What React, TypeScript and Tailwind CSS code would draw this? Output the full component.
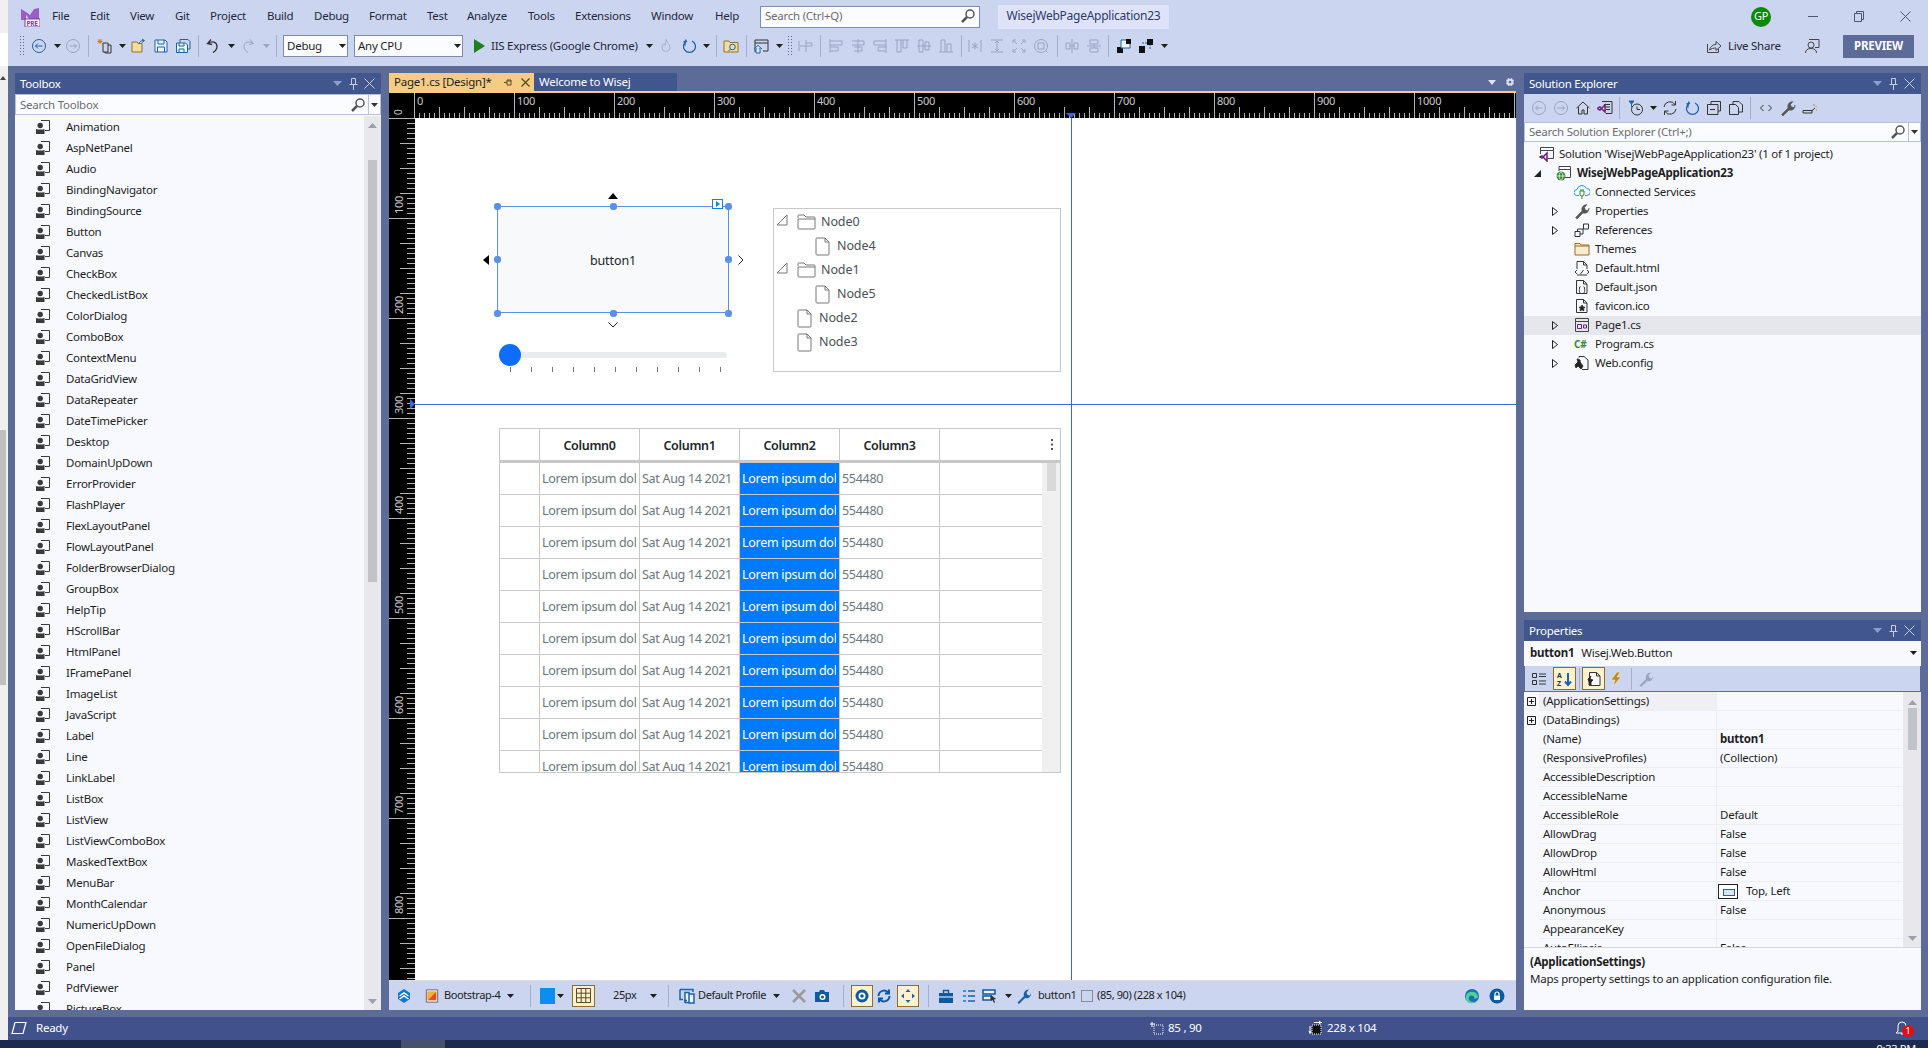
import type { ReactNode } from "react";

const toolboxItems = [
  "Animation", "AspNetPanel", "Audio", "BindingNavigator", "BindingSource", "Button", "Canvas", "CheckBox",
  "CheckedListBox", "ColorDialog", "ComboBox", "ContextMenu", "DataGridView", "DataRepeater", "DateTimePicker",
  "Desktop", "DomainUpDown", "ErrorProvider", "FlashPlayer", "FlexLayoutPanel", "FlowLayoutPanel",
  "FolderBrowserDialog", "GroupBox", "HelpTip", "HScrollBar", "HtmlPanel", "IFramePanel", "ImageList", "JavaScript",
  "Label", "Line", "LinkLabel", "ListBox", "ListView", "ListViewComboBox", "MaskedTextBox", "MenuBar",
  "MonthCalendar", "NumericUpDown", "OpenFileDialog", "Panel", "PdfViewer", "PictureBox",
];

const menus = [
  { label: "File", w: "w-[38px]" },
  { label: "Edit", w: "w-[40px]" },
  { label: "View", w: "w-[45px]" },
  { label: "Git", w: "w-[35px]" },
  { label: "Project", w: "w-[57px]" },
  { label: "Build", w: "w-[47px]" },
  { label: "Debug", w: "w-[55px]" },
  { label: "Format", w: "w-[58px]" },
  { label: "Test", w: "w-[40px]" },
  { label: "Analyze", w: "w-[61px]" },
  { label: "Tools", w: "w-[47px]" },
  { label: "Extensions", w: "w-[76px]" },
  { label: "Window", w: "w-[64px]" },
  { label: "Help", w: "w-[45px]" },
];

const props: [string, string, boolean?][] = [
  ["(ApplicationSettings)", "", true],
  ["(DataBindings)", "", true],
  ["(Name)", "button1"],
  ["(ResponsiveProfiles)", "(Collection)"],
  ["AccessibleDescription", ""],
  ["AccessibleName", ""],
  ["AccessibleRole", "Default"],
  ["AllowDrag", "False"],
  ["AllowDrop", "False"],
  ["AllowHtml", "False"],
  ["Anchor", "Top, Left"],
  ["Anonymous", "False"],
  ["AppearanceKey", ""],
  ["AutoEllipsis", "False"],
];

const BLUE = "#1c62a8";
const DIS = "#9aa3bf";
const DARK = "#333";

const icons: Record<string, ReactNode> = {
  back: <g stroke={BLUE}><circle cx="8" cy="8" r="6.5" /><path d="M11.5 8h-7M7 5.5 4.5 8 7 10.5" /></g>,
  fwd: <g stroke={DIS}><circle cx="8" cy="8" r="6.5" /><path d="M4.5 8h7M9 5.5 11.5 8 9 10.5" /></g>,
  backDis: <g stroke={DIS}><circle cx="8" cy="8" r="6.5" /><path d="M11.5 8h-7M7 5.5 4.5 8 7 10.5" /></g>,
  newProj: <g stroke={DARK}><path d="M3 1v5M.5 3.500h5M1 1.500l4 4M5 1.500l-4 4" stroke="#c27d0e" /><path d="M6 5h5v9H6zM11 7h3v8H8v-1" /></g>,
  open: <g><path d="M1 14V4h5l1 1.500h4V14z" fill="#f2dca6" stroke="#996f1e" /><path d="M8 6c0-2 2-3.500 5-3.500M11 1l2.500 1.500L11 4.500" stroke={BLUE} /></g>,
  save: <g stroke={BLUE}><path d="M2 2h10l2 2v10H2z" fill="#eef2fb" /><path d="M5 2v4h6V2M4.500 14V9h7v5" /></g>,
  saveAll: <g stroke={BLUE}><path d="M5 5V1.500h8l2 2V11h-3" /><path d="M1.500 5h9l2 2v7.500h-11z" fill="#eef2fb" /><path d="M4 5v3h5V5M4 14.500V11h5v3.500" /></g>,
  undo: <g stroke={DARK} strokeWidth="1.300"><path d="M6 1.500 2.500 5.500l4.500 1M3 5.500c4-3 9-1.500 9 3 0 2.500-1.500 4.500-4 6" /></g>,
  redo: <g stroke={DIS}><path d="M10 1.500l3.500 4-4.500 1M13 5.500c-4-3-9-1.500-9 3 0 2.500 1.500 4.500 4 6" /></g>,
  flame: <path d="M8 1.500c1 3 4 4.500 4 8a4 4 0 0 1-8 0c0-2 1-3 2-4 0 1.500 1 2 1.500 2 .5-2 0-4 .5-6z" stroke="#a9b0c7" />,
  reload: <path d="M5 1.500 4 6l-1-3M6 3a6 6 0 1 0 5 0" stroke={BLUE} strokeWidth="1.300" />,
  folderFind: <g><path d="M1 14V3h5l1 1.500h8V14z" fill="#f2dca6" stroke="#996f1e" /><circle cx="9.500" cy="9" r="2.800" stroke={BLUE} /><path d="M7.500 11 5.500 13" stroke={BLUE} /></g>,
  winHome: <g stroke={DARK}><path d="M2 14V2h13v11h-5M2 5h13" /><path d="M1 11l4-3.500L9 11M3 10v5h4v-5" stroke={BLUE} fill="#dfe9fa" /></g>,
  hcenter: <g stroke={DIS}><path d="M1 3v10M8 2v12M8 5h6v3H8M2 8h6" /></g>,
  alignL: <g stroke={DIS}><path d="M2 1v14M2 3h12v4H2M2 9h8v4H2" /></g>,
  alignC: <g stroke={DIS}><path d="M8 1v14M2 3h12v4H2M4 9h8v4H4" /></g>,
  alignR: <g stroke={DIS}><path d="M14 1v14M14 3H2v4h12M14 9H6v4h8" /></g>,
  alignT: <g stroke={DIS}><path d="M1 2h14M3 2v12h4V2M9 2v8h4V2" /></g>,
  alignM: <g stroke={DIS}><path d="M1 8h14M3 2h4v12H3zM9 4h4v8H9z" /></g>,
  alignB: <g stroke={DIS}><path d="M1 14h14M3 14V2h4v12M9 14V6h4v8" /></g>,
  sameW: <g stroke={DIS}><path d="M2 2v12M14 2v12M8 4.500v7M5 6l3 2 3-2M5 10l3-2 3 2" /></g>,
  sameH: <g stroke={DIS}><path d="M2 2h12M2 14h12M8 3v10M6 5l2-2 2 2M6 11l2 2 2-2" /></g>,
  sameS: <g stroke={DIS}><path d="M2 5V2h3M11 2h3v3M14 11v3h-3M5 14H2v-3M3 3l3 3M13 3l-3 3M3 13l3-3M13 13l-3-3" /></g>,
  sizeF: <g stroke={DIS}><circle cx="8" cy="8" r="6.500" /><path d="M5 5h6v6H5z" /><path d="M12.500 12.500l2 2" /></g>,
  centerH: <g stroke={DIS}><path d="M2 5h4v6H2zM10 5h4v6h-4zM6 8h4M8 1v14" /></g>,
  centerV: <g stroke={DIS}><path d="M4 2h8v4H4zM4 10h8v4H4zM8 6v4M1 8h14" /></g>,
  front: <g><path d="M1 9h6v6H1z" fill="#111" /><path d="M5 2h9v8H5z" fill="#f4f8ff" stroke={BLUE} /><path d="M10 1h5v5h-5z" fill="#111" /></g>,
  rear: <g><path d="M1 8h6v7H1z" fill="#111" /><path d="M4 5h8v6" stroke={BLUE} strokeDasharray="2 1" /><path d="M9 1h6v6H9z" fill="#111" /></g>,
  search: <g stroke="#555" strokeWidth="1.500"><circle cx="10" cy="6" r="4" /><path d="M7 9l-5 5" strokeWidth="2.500" /></g>,
  share: <g stroke="#444"><path d="M1.500 6v8.500h11V11" /><path d="M3.500 12c1-4 4-5.500 6.500-5.500V3.500l5 4.500-5 4.500V10c-2.500 0-4.500.5-6.500 2z" /></g>,
  person: <g stroke="#444"><path d="M5 1.500h10v8h-4" /><circle cx="7" cy="7" r="3" fill="#ccd5f0" /><path d="M1.500 15c0-3 2-4.500 5.500-4.500s5.500 1.500 5.500 4.500" /></g>,
  home: <path d="M1.500 8 8 2l6.500 6M3.500 7v7h3.500v-4h2v4h3.500V7" stroke={DARK} />,
  vsSwitch: <g><path d="M5 1.500h10v12H9M7 4.500h6M7 7h6M9 9.500h4" stroke={DARK} /><path d="M1 8l2-1 5 5V5L3 10l-2-1z" stroke="#68217a" strokeWidth="1.500" fill="#fff" /></g>,
  history: <g stroke={DARK}><circle cx="9" cy="9.500" r="5.500" /><path d="M9 6.500v3h3" /><path d="M1 1h5L3.500 4z" fill={BLUE} stroke={BLUE} /><path d="M3.500 4v3" stroke={BLUE} /></g>,
  sync: <g stroke={DARK}><path d="M2 7a6 6 0 0 1 11-2.500M13.500 1v4h-4M14 9a6 6 0 0 1-11 2.500M2.500 15v-4h4" /></g>,
  collapse: <g stroke={DARK}><path d="M5 4V1.500h9.500V11H12" /><path d="M1.500 4.500H12v10H1.500zM4 9.500h5" /></g>,
  showAll: <g stroke={DARK}><path d="M5 4V1.500h6l3.500 3.500v7H11" /><path d="M1.500 4.500h6l3 3v7h-9z" fill="#ccd5f0" /></g>,
  code: <path d="M5.500 5 2.500 8l3 3M10.500 5l3 3-3 3" stroke={DARK} />,
  wrench: <path d="M1.500 14.500 8 8c-1-3 1-6.500 5-6.500l-2.500 3 1 2.500 2.500.5L15 5c.5 4-3 6-6 5l-6 6z" fill="#555" stroke="#555" strokeWidth=".5" />,
  wrenchBlue: <path d="M1.500 14.500 8 8c-1-3 1-6.500 5-6.500l-2.500 3 1 2.500 2.500.5L15 5c.5 4-3 6-6 5l-6 6z" fill={BLUE} />,
  wrenchDis: <path d="M1.500 14.500 8 8c-1-3 1-6.500 5-6.500l-2.500 3 1 2.500 2.500.5L15 5c.5 4-3 6-6 5l-6 6z" fill={DIS} />,
  previewOn: <g stroke={DARK}><path d="M1 13h9v-2.500H1zM9.500 11 13 8" /><path d="M12 4v2M14.500 6l-1 1M15 10h-1" stroke="#c28a1a" /></g>,
  toolboxItem: <g><circle cx="5.200" cy="6.500" r="2.700" fill="#3a3a3a" /><path d="M1 15v-5l2 .5h4.500l2-.5v5z" fill="#3a3a3a" /><path d="M6 1.500h8.500v10H10" stroke="#3a3a3a" /></g>,
  solution: <g><path d="M1.500 1.500h13v11h-6M1.500 4.500h13M1.500 1.500V8" stroke="#444" /><path d="M1 11l2-1 5 5V7l-5 5-2-1z" stroke="#68217a" strokeWidth="1.500" /></g>,
  project: <g><path d="M3 1.500h11.500v11H9M3 4.500h11.500M3 1.500V6" stroke="#444" /><circle cx="5" cy="11" r="4.500" fill="#388a34" /><path d="M.5 11h9M5 6.500c-2.500 3-2.500 6 0 9M5 6.500c2.500 3 2.500 6 0 9" stroke="#fff" strokeWidth=".7" /></g>,
  cloud: <g><path d="M5 11.500H3a3 3 0 0 1 0-6 5 5 0 0 1 9.500-1 3.500 3.500 0 0 1 .5 7h-2" stroke="#1ba1e2" /><path d="M6 7v3a2 2 0 0 0 4 0V7zM7 7V5M9 7V5M8 12v3" stroke="#388a34" /></g>,
  refs: <g stroke={DARK}><path d="M1 9.500h5v5H1zM9.500 2h5v5h-5zM6 12h3V7" /><path d="M3.500 9.500V7h6" /></g>,
  folderPlain: <path d="M1 14V2.500h5L7 4h8v10zM1 5h14" stroke="#996f1e" fill="#f6eccf" />,
  htmlFile: <g stroke={DARK}><path d="M3 9V1.500h6.500L13 5v4M3 15h10M9.500 1.500V5H13" /><path d="M3 10l-2 2 2 2M13 10l2 2-2 2M6.500 14l3-4" /></g>,
  jsonFile: <g stroke={DARK}><path d="M2.500 14.500v-13h7L13 5v9.500zM9.500 1.500V5H13" /><path d="M6.500 7.500c-1.500 0-.5 3-1.500 3.500 1 .5 0 3 1.500 3M9.500 7.500c1.500 0 .5 3 1.500 3.500-1 .5 0 3-1.500 3" /></g>,
  icoFile: <g stroke={DARK}><path d="M2.500 14.500v-13h7L13 5v9.500zM9.500 1.500V5H13" /><path d="M8 7l1 2 2 .3-1.500 1.400.4 2.100L8 11.800l-1.900 1 .4-2.100L5 9.300 7 9z" fill="#222" /></g>,
  form: <g stroke="#444"><path d="M1.500 1.500h13v13h-13zM1.500 4.500h13" /><path d="M3.500 7.500h4v4h-4zM9.500 8h3v3h-3z" stroke="#68217a" /></g>,
  webCfg: <g stroke={DARK}><path d="M5 2.500v-1h5L14 5v9.500H8" /><path d="M1 10l3-3-1-3c2 0 4 1 3 3l3 4-2 3-3-3-2 2z" fill="#222" /></g>,
  categorize: <g stroke={DARK}><path d="M1.500 2.500h4v4h-4zM1.500 9.500h4v4h-4zM8 3h7M8 5.500h7M8 10h7M8 13h7" /></g>,
  alpha: <g><text x="0" y="7" fontSize="7" fontWeight="700" fill={DARK}>A</text><text x="0" y="15" fontSize="7" fontWeight="700" fill={DARK}>Z</text><path d="M11 2v12M8 10.500l3 3.500 3-3.500" stroke={BLUE} strokeWidth="2" /></g>,
  propPage: <g stroke={DARK}><path d="M3.500 1.500h7L14 5v9.500H3.500zM10.500 1.500V5H14" fill="#fff" /><path d="M2 8l3-3-1 3 3 1-2 2v3H3v-3z" fill="#222" /></g>,
  bolt: <path d="M9 1 3 9h4l-2 6 8-9H9l3-5z" fill="#c28a1a" stroke="#f5f0d5" strokeWidth=".5" />,
  wisej: <g><path d="M8 1l6 4v6l-6 4-6-4V5z" fill="#0a78d6" /><path d="M3.500 8 8 5l4.500 3M3.500 11 8 8l4.500 3" stroke="#fff" strokeWidth="1.500" /></g>,
  theme: <g><path d="M1.500 1h13v14h-13z" fill="#fff" stroke="#555" /><path d="M3 3h10v10H3z" fill="#e84d1c" /><path d="M3 3h10L3 13z" fill="#f8b030" /></g>,
  devices: <g stroke={BLUE} strokeWidth="1.500"><path d="M1 1.500h13V4M4 11.500H1v-10" /><path d="M5 12.500h3M6 4.500h4v10H6zM10 6h5v9h-5z" fill="#eef2fb" /></g>,
  xGray: <path d="M2 2l12 12M14 2 2 14" stroke="#9a9a9a" strokeWidth="2.500" />,
  camera: <g><path d="M1 4h4l1-2h4l1 2h4v10H1z" fill="#0e5aa0" /><circle cx="8.500" cy="9" r="3" fill="#fff" /><circle cx="8.500" cy="9" r="1.500" fill="#0e5aa0" /></g>,
  eye: <g><circle cx="8" cy="8" r="6.500" fill="#0e5aa0" /><circle cx="8" cy="8" r="3.500" fill="#fff" /><circle cx="8" cy="8" r="1.800" fill="#0e5aa0" /></g>,
  reloadBold: <path d="M2.500 8a5.500 5.500 0 0 1 10-3M13.500 8a5.500 5.500 0 0 1-10 3M13 1.500V5.500H9M3 14.500V10.500H7" stroke="#0e5aa0" strokeWidth="2" />,
  move: <g fill={BLUE}><path d="M8 1 5.500 4h5zM8 15l-2.500-3h5zM1 8l3-2.500v5zM15 8l-3-2.500v5z" /></g>,
  briefcase: <g><path d="M1 5h14v10H1z" fill="#0e5aa0" /><path d="M5.500 5V2.500h5V5" stroke="#0e5aa0" strokeWidth="1.500" /><path d="M1 9h14" stroke="#fff" /></g>,
  tree: <g><path d="M2 2h3v2H2zM2 7h3v2H2zM2 12h3v2H2z" fill="#1ba1e2" /><path d="M7 3h7M7 8h7M7 13h7" stroke={BLUE} strokeWidth="1.300" /></g>,
  cursor: <g><path d="M1 2h12v4H1zM1 8h8v4H1z" stroke="#0e5aa0" fill="#eef2fb" strokeWidth="1.500" /><path d="M9 7l5 4-2 .5 1 3-1 .5-1.500-3L9 13z" fill="#333" /></g>,
  dotted: <path d="M2.500 2.500h11v11h-11z" stroke="#444" strokeDasharray="1 1" />,
  edge: <g><circle cx="8" cy="8" r="7" fill="#1a6fb5" /><path d="M2 8c1-5 10-6 12 0 .5 2-2 3-4 2.500 1-2-1-3.500-3-3-3 .5-3 4.500 0 6 1 .5 3 .5 4.500 0-2 2-6 2.500-8 .5C2.500 13 1.500 10 2 8z" fill="#4fcf9a" /></g>,
  lock: <g><circle cx="8" cy="8" r="7.500" fill="#0e5aa0" /><path d="M5 7.500h6V12H5z" fill="#fff" /><path d="M6 7.500V6a2 2 0 0 1 4 0v1.500" stroke="#fff" strokeWidth="1.200" /></g>,
  ready: <path d="M4 2.500h11L12 13.500H1z" stroke="#fff" strokeWidth="1.200" />,
  pos: <g stroke="#fff"><path d="M5 5h9v9H5z" strokeDasharray="1 1" /><path d="M3 2v5M1 4h5" /></g>,
  size: <g><path d="M4 5h9v9H4z" fill="#111" stroke="#fff" strokeDasharray="1 1" /><path d="M6 2.500h8M11 1l2 1.500L11 4M2 6v8M1 11l1 2 1-2" stroke="#fff" /></g>,
  bell: <path d="M8 2a4 4 0 0 1 4 4v5l2 2H2l2-2V6a4 4 0 0 1 4-4zM7 14h2" stroke="#fff" />,
  gear: <g><path d="M6 3v10M10 3v10M3 6h10M3 10h10" stroke="#d8def0" strokeWidth="1.800" /><circle cx="8" cy="8" r="4.500" fill="#d8def0" /><circle cx="8" cy="8" r="1.800" fill="#5d6b99" /></g>,
};

function Ic({ name, className = "w-[22px]" }: { name: string; className?: string }) {
  return (
    <span className={`flex items-center justify-center shrink-0 ${className}`}>
      <svg width="16" height="16" viewBox="0 0 16 16" fill="none">
        {icons[name]}
      </svg>
    </span>
  );
}

function Caret({ className = "", color = "#1e1e1e" }: { className?: string; color?: string }) {
  return (
    <span className={`flex items-center justify-center w-[10px] shrink-0 ${className}`}>
      <svg width="7" height="4" viewBox="0 0 7 4">
        <path d="M0 0h7L3.500 4z" fill={color} />
      </svg>
    </span>
  );
}

function Sep({ className = "" }: { className?: string }) {
  return <span className={`w-px h-[22px] bg-[#a5afcb] shrink-0 ${className}`} />;
}

function Grip({ className = "" }: { className?: string }) {
  return (
    <span
      className={`w-[6px] h-[22px] shrink-0 bg-[radial-gradient(#596a9c_1px,transparent_1px)] bg-[length:3px_3px] ${className}`}
    />
  );
}

function Combo({ label, className }: { label: string; className: string }) {
  return (
    <span
      className={`h-[22px] bg-[#fbfcff] border border-[#7f8bad] flex items-center pl-[3px] shrink-0 ${className}`}
    >
      {label}
      <Caret className="ml-auto" />
    </span>
  );
}

function TitleBar() {
  return (
    <div className="h-[66px] bg-[#ccd5f0] flex flex-col shrink-0">
      <div className="h-[33px] flex items-center">
        <svg className="ml-[12px] mr-[12px] shrink-0" width="20" height="20" viewBox="0 0 20 20">
          <path d="M1 13V2l5 3 4 3 4-6 5-1v12z" fill="#9c5dc9" />
          <path d="M6 8 10 13 6 13z" fill="#ccd5f0" />
          <rect x="5" y="12" width="15" height="8" fill="#fff" stroke="#7b3fa8" />
          <text x="6.500" y="18.500" fontSize="6.500" fontWeight="700" fill="#7b3fa8">PRE</text>
        </svg>
        {menus.map((m) => (
          <span key={m.label} className={`text-[#24273a] shrink-0 -mt-[2px] ${m.w}`}>
            {m.label}
          </span>
        ))}
        <div className="w-[220px] h-[22px] bg-[#fbfcff] border border-[#7f8bad] flex items-center pl-[4px] pb-px text-[#6d6d6d] shrink-0">
          Search (Ctrl+Q)
          <Ic name="search" className="ml-auto w-[22px]" />
        </div>
        <div className="ml-[18px] w-[171px] h-[24px] pb-px bg-[#dfe3fa] text-[#2c3a6a] text-[12px] flex items-center justify-center shrink-0">
          WisejWebPageApplication23
        </div>
        <span className="ml-auto mr-[19px] w-[20px] h-[20px] rounded-full bg-[#0a8a0a] text-white text-[11px] flex items-center justify-center">
          GP
        </span>
        <span className="w-[46px] flex justify-center">
          <span className="w-[10px] h-px bg-[#4d5570]" />
        </span>
        <span className="w-[46px] flex justify-center">
          <svg width="10" height="11" viewBox="0 0 10 11" fill="none" stroke="#4d5570">
            <path d="M.5 2.500h7v8h-7zM2.500 2.500v-2h7v8h-2" />
          </svg>
        </span>
        <span className="w-[46px] flex justify-center">
          <svg width="11" height="11" viewBox="0 0 11 11" fill="none" stroke="#4d5570">
            <path d="M.5.5l10 10M10.500.5l-10 10" />
          </svg>
        </span>
      </div>
      <div className="h-[33px] flex items-center pl-[11px] pb-[7px]">
        <Grip />
        <Ic name="back" className="w-[22px] ml-[3px]" />
        <Caret className="ml-[2px]" />
        <Ic name="fwd" />
        <Sep className="ml-[4px]" />
        <Ic name="newProj" className="w-[22px] ml-[5px]" />
        <Caret className="ml-px" />
        <Ic name="open" className="w-[22px] ml-px" />
        <Ic name="save" />
        <Ic name="saveAll" />
        <Sep className="ml-[4px]" />
        <Ic name="undo" className="w-[22px] ml-[3px]" />
        <Caret className="ml-[2px]" />
        <Ic name="redo" className="w-[22px] ml-px" />
        <Caret className="ml-[2px]" color={DIS} />
        <Sep className="ml-[5px]" />
        <Combo label="Debug" className="w-[65px] ml-[6px]" />
        <Combo label="Any CPU" className="w-[109px] ml-[6px]" />
        <svg className="ml-[8px] shrink-0" width="16" height="16" viewBox="0 0 16 16">
          <path d="M3 1l11 7-11 7z" fill="#1e7f1e" />
        </svg>
        <span className="ml-[4px] w-[150px] shrink-0 whitespace-nowrap text-[#24273a]">IIS Express (Google Chrome)</span>
        <Caret className="ml-[3px]" />
        <Ic name="flame" className="w-[22px] ml-px" />
        <Ic name="reload" className="w-[22px] ml-px" />
        <Caret className="ml-px" />
        <Sep className="ml-[5px]" />
        <Ic name="folderFind" className="w-[22px] ml-[3px]" />
        <Sep className="ml-[4px]" />
        <Ic name="winHome" className="w-[22px] ml-[3px]" />
        <Caret className="ml-[2px]" />
        <Grip className="ml-[3px]" />
        <Ic name="hcenter" className="w-[22px] ml-[2px]" />
        <Sep className="ml-[3px]" />
        <Ic name="alignL" className="w-[22px] ml-[4px]" />
        <Ic name="alignC" />
        <Ic name="alignR" />
        <Ic name="alignT" />
        <Ic name="alignM" />
        <Ic name="alignB" />
        <Sep className="ml-[4px]" />
        <Ic name="sameW" className="w-[22px] ml-[2px]" />
        <Ic name="sameH" />
        <Ic name="sameS" />
        <Ic name="sizeF" />
        <Sep className="ml-[5px]" />
        <Ic name="centerH" className="w-[22px] ml-[3px]" />
        <Ic name="centerV" />
        <Sep className="ml-[3px]" />
        <Ic name="front" className="w-[22px] ml-[4px]" />
        <Ic name="rear" />
        <Caret className="ml-[2px]" />
        <Ic name="share" className="ml-auto w-[16px]" />
        <span className="ml-[6px] w-[54px] whitespace-nowrap text-[#24273a]">Live Share</span>
        <Ic name="person" className="w-[16px] ml-[22px]" />
        <span className="ml-[23px] mr-[14px] w-[71px] h-[23px] bg-[#5d6b99] text-white text-[11.5px] font-bold flex items-center justify-center">
          PREVIEW
        </span>
      </div>
    </div>
  );
}

function PanelHeader({ title }: { title: string }) {
  return (
    <div className="h-[21px] bg-[#40568d] text-white flex items-center pl-[5px] pr-[4px] shrink-0">
      <span>{title}</span>
      <span className="ml-auto w-[16px] flex justify-center">
        <svg width="9" height="5" viewBox="0 0 9 5">
          <path d="M0 0h9L4.500 5z" fill="#8f9ccb" />
        </svg>
      </span>
      <span className="w-[16px] flex justify-center">
        <svg width="9" height="12" viewBox="0 0 9 12" fill="none" stroke="#c6cfe8">
          <path d="M2.500.5h4v6h-4zM.5 6.500h8M4.500 6.500V12" />
        </svg>
      </span>
      <span className="w-[16px] flex justify-center">
        <svg width="11" height="11" viewBox="0 0 11 11" fill="none" stroke="#c6cfe8">
          <path d="M.5.5l10 10M10.500.5l-10 10" />
        </svg>
      </span>
    </div>
  );
}

function SearchBox({ label, className }: { label: string; className: string }) {
  return (
    <div className={`flex items-stretch bg-[#fbfcff] border border-[#b8c1dc] shrink-0 ${className}`}>
      <span className="pl-[4px] flex-1 flex items-center text-[#6d6d6d]">{label}</span>
      <Ic name="search" className="w-[20px]" />
      <span className="w-[12px] bg-[#fbfcff] border-l border-[#b8c1dc] flex items-center justify-center">
        <svg width="7" height="4" viewBox="0 0 7 4">
          <path d="M0 0h7L3.500 4z" fill="#333" />
        </svg>
      </span>
    </div>
  );
}

function Toolbox() {
  return (
    <div className="w-[366px] flex flex-col shrink-0">
      <PanelHeader title="Toolbox" />
      <SearchBox label="Search Toolbox" className="h-[21px]" />
      <div className="flex-1 min-h-0 flex bg-[#f8f9ff] pt-px">
        <div className="flex-1 overflow-hidden">
          {toolboxItems.map((t) => (
            <div key={t} className="h-[21px] flex items-center pl-[20px]">
              <Ic name="toolboxItem" className="w-[16px]" />
              <span className="ml-[15px]">{t}</span>
            </div>
          ))}
        </div>
        <div className="w-[17px] bg-[#e8e8ec] flex flex-col items-center">
          <svg className="mt-[7px]" width="9" height="5" viewBox="0 0 9 5">
            <path d="M0 5h9L4.500 0z" fill="#9ca0ad" />
          </svg>
          <div className="mt-[32px] w-[9px] h-[422px] bg-[#c2c3c9]" />
          <svg className="mt-auto mb-[6px]" width="9" height="5" viewBox="0 0 9 5">
            <path d="M0 0h9L4.500 5z" fill="#9ca0ad" />
          </svg>
        </div>
      </div>
    </div>
  );
}

const topTicks = Array.from({ length: 221 }, (_, i) => i * 5);
const sideTicks = Array.from({ length: 173 }, (_, i) => i * 5);

function TopRuler() {
  return (
    <svg className="block bg-black shrink-0" width="1127" height="25" viewBox="0 0 1127 25">
      {topTicks.map((v) => {
        const x = 25.5 + v;
        const h = v % 100 === 0 ? 25 : v % 25 === 0 ? 11 : 5;
        return <path key={v} d={`M${x} 25v-${h}`} stroke="#b4b4b4" />;
      })}
      {topTicks
        .filter((v) => v % 100 === 0)
        .map((v) => (
          <text key={v} x={28 + v} y="12" fontSize="11" fill="#c8c8c8">
            {v}
          </text>
        ))}
      <text x="0" y="0" transform="translate(13 22) rotate(-90)" fontSize="10" fill="#c8c8c8">0</text>
      <path d="M677 20h10l-5 5z" fill="#3f66d8" />
    </svg>
  );
}

function SideRuler() {
  return (
    <svg className="block bg-black shrink-0" width="26" height="862" viewBox="0 0 26 862">
      {sideTicks.map((v) => {
        const h = v % 100 === 0 ? 26 : v % 25 === 0 ? 15 : 8;
        return <path key={v} d={`M26 ${v + 0.5}h-${h}`} stroke="#b4b4b4" />;
      })}
      {sideTicks
        .filter((v) => v % 100 === 0 && v > 0)
        .map((v) => (
          <text key={v} x="0" y="0" transform={`translate(14 ${v - 4}) rotate(-90)`} fontSize="11" fill="#c8c8c8">
            {v}
          </text>
        ))}
      <path d="M21 281v10l5-5z" fill="#3f66d8" />
    </svg>
  );
}

function Handle({ className }: { className: string }) {
  return <span className={`absolute w-[7px] h-[7px] rounded-[3px] bg-[#5b8fe8] ${className}`} />;
}

function FileIcon() {
  return (
    <svg className="shrink-0" width="15" height="19" viewBox="0 0 15 19" fill="none" stroke="#777">
      <path d="M2 1h8l4 4v12a1 1 0 0 1-1 1H2a1 1 0 0 1-1-1V2a1 1 0 0 1 1-1zM10 1v4h4" />
    </svg>
  );
}

function FolderIcon() {
  return (
    <svg className="shrink-0" width="19" height="16" viewBox="0 0 19 16" fill="none" stroke="#777">
      <path d="M1 4V2a1 1 0 0 1 1-1h5l2 2h8a1 1 0 0 1 1 1v1M1 5h17v9a1 1 0 0 1-1 1H2a1 1 0 0 1-1-1z" />
    </svg>
  );
}

function Expander() {
  return (
    <svg className="shrink-0 -mt-[4px]" width="12" height="12" viewBox="0 0 12 12" fill="none" stroke="#777">
      <path d="M11 1 1 11h10z" />
    </svg>
  );
}

function TreeBox() {
  return (
    <div className="absolute left-[358px] top-[90px] w-[288px] h-[164px] border border-[#c8c8c8] pt-px text-[12.5px] tracking-[-0.1px] text-[#495057]">
      <div className="h-[24px] flex items-center pl-[2px]">
        <Expander />
        <span className="ml-[9px]"><FolderIcon /></span>
        <span className="ml-[5px]">Node0</span>
      </div>
      <div className="h-[24px] flex items-center pl-[41px]">
        <FileIcon />
        <span className="ml-[7px]">Node4</span>
      </div>
      <div className="h-[24px] flex items-center pl-[2px]">
        <Expander />
        <span className="ml-[9px]"><FolderIcon /></span>
        <span className="ml-[5px]">Node1</span>
      </div>
      <div className="h-[24px] flex items-center pl-[41px]">
        <FileIcon />
        <span className="ml-[7px]">Node5</span>
      </div>
      <div className="h-[24px] flex items-center pl-[23px]">
        <FileIcon />
        <span className="ml-[7px]">Node2</span>
      </div>
      <div className="h-[24px] flex items-center pl-[23px]">
        <FileIcon />
        <span className="ml-[7px]">Node3</span>
      </div>
    </div>
  );
}

function DesignButton() {
  return (
    <>
      <div className="absolute left-[82px] top-[88px] w-[232px] h-[107px] pt-[3px] bg-[#f8f9fa] border border-[#5b8fe8] flex items-center justify-center text-[12.5px] tracking-[-0.1px] text-[#212529]">
        button1
      </div>
      <Handle className="left-[79px] top-[85px]" />
      <Handle className="left-[195px] top-[85px]" />
      <Handle className="left-[310px] top-[85px]" />
      <Handle className="left-[79px] top-[138px]" />
      <Handle className="left-[310px] top-[138px]" />
      <Handle className="left-[79px] top-[192px]" />
      <Handle className="left-[195px] top-[192px]" />
      <Handle className="left-[310px] top-[192px]" />
      <svg className="absolute left-[193px] top-[75px]" width="10" height="6" viewBox="0 0 10 6">
        <path d="M0 6h10L5 0z" fill="#000" />
      </svg>
      <svg className="absolute left-[68px] top-[137px]" width="6" height="10" viewBox="0 0 6 10">
        <path d="M6 0v10L0 5z" fill="#000" />
      </svg>
      <svg className="absolute left-[323px] top-[137px]" width="6" height="10" viewBox="0 0 6 10" fill="none" stroke="#222">
        <path d="M.5.5 5 5 .5 9.500" />
      </svg>
      <svg className="absolute left-[193px] top-[204px]" width="10" height="6" viewBox="0 0 10 6" fill="none" stroke="#222">
        <path d="M.5.5 5 5 9.500.5" />
      </svg>
      <div className="absolute left-[297px] top-[81px] w-[11px] h-[10px] bg-white border border-[#0a84e0] flex items-center justify-center">
        <svg width="4" height="6" viewBox="0 0 4 6">
          <path d="M0 0v6l4-3z" fill="#0a84e0" />
        </svg>
      </div>
    </>
  );
}

const sliderTicks = ["t0", "t1", "t2", "t3", "t4", "t5", "t6", "t7", "t8", "t9", "t10"];

function Slider() {
  return (
    <div className="absolute left-[84px] top-[226px] w-[229px] h-[28px]">
      <div className="absolute left-[11px] top-[8px] w-[217px] h-[6px] rounded-full bg-[#e9ecef]" />
      <div className="absolute left-0 top-0 w-[22px] h-[22px] rounded-full bg-[#0d6efd]" />
      <div className="absolute left-[11px] top-[23px] w-[211px] flex justify-between">
        {sliderTicks.map((t) => (
          <span key={t} className="w-px h-[5px] bg-[#777]" />
        ))}
      </div>
    </div>
  );
}

const gridRows = ["r0", "r1", "r2", "r3", "r4", "r5", "r6", "r7", "r8", "r9"];

function Cell({ text, selected }: { text: string; selected?: boolean }) {
  return (
    <div className={`w-[100px] h-full border-r pl-[2px] pr-[3px] pt-[2px] flex items-center shrink-0 ${selected ? "bg-[#007bff] text-white border-[#c8c8c8]" : "border-[#c8c8c8]"}`}>
      <span className="block w-full overflow-hidden whitespace-nowrap">{text}</span>
    </div>
  );
}

function DataGrid() {
  return (
    <div className="absolute left-[84px] top-[310px] w-[562px] h-[345px] border border-[#c8c8c8] flex flex-col overflow-hidden text-[12.5px] tracking-[-0.3px] text-[#6c757d]">
      <div className="h-[34px] flex shrink-0 border-b-[3px] border-[#c8c8c8] text-[#212529] font-semibold">
        <div className="w-[40px] border-r border-[#c8c8c8]" />
        {["Column0", "Column1", "Column2", "Column3"].map((c) => (
          <div key={c} className="w-[100px] pt-[3px] border-r border-[#c8c8c8] flex items-center justify-center">
            {c}
          </div>
        ))}
        <div className="flex-1 flex justify-end items-center pr-[7px]">
          <svg width="2" height="11" viewBox="0 0 2 11">
            <path d="M0 0h2v2H0zM0 4.500h2v2H0zM0 9h2v2H0z" fill="#555" />
          </svg>
        </div>
      </div>
      <div className="flex-1 min-h-0 flex">
        <div className="flex-1 min-w-0 overflow-hidden">
          {gridRows.map((r) => (
            <div key={r} className="h-[32px] flex border-b border-[#c8c8c8]">
              <div className="w-[40px] h-full border-r border-[#c8c8c8] shrink-0" />
              <Cell text="Lorem ipsum dolor sit amet" />
              <Cell text="Sat Aug 14 2021" />
              <Cell text="Lorem ipsum dolor sit amet" selected />
              <Cell text="554480" />
              <div className="flex-1" />
            </div>
          ))}
        </div>
        <div className="w-[18px] bg-[#f0f0f0] flex justify-center shrink-0">
          <div className="w-[9px] h-[28px] bg-[#d9d9d9]" />
        </div>
      </div>
    </div>
  );
}

function DesignerBar() {
  return (
    <div className="h-[30px] shrink-0 bg-[#ccd5f0] border-t border-[#dcdcdc] flex items-center pl-[4px] text-[11px] tracking-[-0.4px] text-[#1e1e1e]">
      <Ic name="wisej" className="w-[22px]" />
      <Ic name="theme" className="w-[14px] ml-[10px]" />
      <span className="ml-[5px] w-[54px] whitespace-nowrap">Bootstrap-4</span>
      <Caret className="ml-[7px]" />
      <Sep className="ml-[15px]" />
      <span className="ml-[9px] w-[15px] h-[16px] bg-[#0a8ff0] shrink-0" />
      <span className="ml-px w-[8px] flex justify-center"><Caret /></span>
      <span className="ml-[8px] w-[23px] h-[22px] bg-[#fdf1d0] border border-[#8a6d2f] flex items-center justify-center shrink-0">
        <svg width="15" height="15" viewBox="0 0 15 15" fill="none" stroke="#5a4a20">
          <path d="M.5.5h14v14H.5zM5.200.5v14M9.800.5v14M.5 5.200h14M.5 9.800h14" />
        </svg>
      </span>
      <span className="ml-[18px] w-[24px]">25px</span>
      <Caret className="ml-[11px]" />
      <Sep className="ml-[10px]" />
      <Ic name="devices" className="w-[16px] ml-[10px]" />
      <span className="ml-[3px] w-[70px] whitespace-nowrap">Default Profile</span>
      <Caret className="ml-[3px]" />
      <Ic name="xGray" className="w-[22px] ml-[7px]" />
      <Ic name="camera" className="w-[22px] ml-px" />
      <Sep className="ml-[10px]" />
      <span className="ml-[7px] w-[22px] h-[22px] bg-[#fdf1d0] border border-[#8a6d2f] flex items-center justify-center shrink-0">
        <Ic name="eye" className="w-[16px]" />
      </span>
      <Ic name="reloadBold" className="w-[22px]" />
      <span className="ml-[2px] w-[22px] h-[22px] bg-[#fdf1d0] border border-[#8a6d2f] flex items-center justify-center shrink-0">
        <Ic name="move" className="w-[16px]" />
      </span>
      <Sep className="ml-[9px]" />
      <Ic name="briefcase" className="w-[22px] ml-[6px]" />
      <Ic name="tree" className="w-[22px] ml-px" />
      <Ic name="cursor" className="w-[20px]" />
      <Caret className="ml-[3px]" />
      <Ic name="wrenchBlue" className="w-[20px] ml-px" />
      <span className="ml-[4px] w-[38px] whitespace-nowrap">button1</span>
      <Ic name="dotted" className="w-[16px] ml-[3px]" />
      <span className="ml-[2px] whitespace-nowrap">(85, 90) (228 x 104)</span>
      <Ic name="edge" className="ml-auto w-[16px]" />
      <Ic name="lock" className="ml-[9px] w-[16px] mr-[11px]" />
    </div>
  );
}

function DocumentWell() {
  return (
    <div className="w-[1127px] flex flex-col shrink-0">
      <div className="h-[18px] flex items-stretch shrink-0">
        <div className="w-[145px] bg-[#f5cc84] text-[#1e1e1e] flex items-center pl-[5px] shrink-0">
          <span className="whitespace-nowrap">Page1.cs [Design]*</span>
          <svg className="ml-auto" width="9" height="9" viewBox="0 0 9 9" fill="none" stroke="#5a4a20">
            <path d="M0 4.500h3M3 2v5h4V2zM3 3h4" />
          </svg>
          <svg className="ml-[8px] mr-[4px]" width="9" height="9" viewBox="0 0 9 9" fill="none" stroke="#5a4a20" strokeWidth="1.300">
            <path d="M.5.5l8 8M8.500.5l-8 8" />
          </svg>
        </div>
        <div className="w-[143px] bg-[#40568d] text-white flex items-center pl-[5px] shrink-0">Welcome to Wisej</div>
        <svg className="ml-auto mr-[8px] self-center" width="8" height="5" viewBox="0 0 8 5">
          <path d="M0 0h8L4 5z" fill="#dfe4f5" />
        </svg>
        <Ic name="gear" className="w-[12px]" />
      </div>
      <div className="h-[2px] bg-[#f5cc84] shrink-0" />
      <TopRuler />
      <div className="flex-1 min-h-0 flex">
        <SideRuler />
        <div className="relative flex-1 bg-white overflow-hidden">
          <DesignButton />
          <Slider />
          <TreeBox />
          <DataGrid />
          <span className="absolute left-[656px] top-0 w-px h-full bg-[#3f66d8]" />
          <span className="absolute left-0 top-[286px] h-px w-full bg-[#3f66d8]" />
        </div>
      </div>
      <DesignerBar />
    </div>
  );
}

const solutionRows = [
  { label: "Connected Services", icon: "cloud", arrow: false },
  { label: "Properties", icon: "wrench", arrow: true },
  { label: "References", icon: "refs", arrow: true },
  { label: "Themes", icon: "folderPlain", arrow: false },
  { label: "Default.html", icon: "htmlFile", arrow: false },
  { label: "Default.json", icon: "jsonFile", arrow: false },
  { label: "favicon.ico", icon: "icoFile", arrow: false },
  { label: "Page1.cs", icon: "form", arrow: true, active: true },
  { label: "Program.cs", icon: "cs", arrow: true },
  { label: "Web.config", icon: "webCfg", arrow: true },
];

function SolutionExplorer() {
  return (
    <div className="h-[539px] flex flex-col shrink-0">
      <PanelHeader title="Solution Explorer" />
      <div className="h-[28px] bg-[#ccd5f0] flex items-center pl-[4px] shrink-0">
        <Ic name="backDis" />
        <Ic name="fwd" />
        <Ic name="home" />
        <Ic name="vsSwitch" />
        <Sep className="ml-[3px]" />
        <Ic name="history" className="w-[22px] ml-[5px]" />
        <Caret className="ml-px" />
        <Ic name="sync" className="w-[22px] ml-px" />
        <Ic name="reload" />
        <Ic name="collapse" />
        <Ic name="showAll" />
        <Sep className="ml-[3px]" />
        <Ic name="code" className="w-[22px] ml-[4px]" />
        <Ic name="wrench" />
        <Ic name="previewOn" />
      </div>
      <SearchBox label="Search Solution Explorer (Ctrl+;)" className="h-[20px]" />
      <div className="flex-1 min-h-0 bg-[#f8f9ff] pt-[3px]">
        <div className="h-[19px] flex items-center pl-[15px] pb-px">
          <Ic name="solution" className="w-[16px]" />
          <span className="ml-[4px] whitespace-nowrap">Solution 'WisejWebPageApplication23' (1 of 1 project)</span>
        </div>
        <div className="h-[19px] flex items-center pl-[10px] pb-px">
          <svg width="7" height="7" viewBox="0 0 7 7">
            <path d="M7 0v7H0z" fill="#222" />
          </svg>
          <Ic name="project" className="w-[16px] ml-[15px]" />
          <span className="ml-[5px] font-bold whitespace-nowrap">WisejWebPageApplication23</span>
        </div>
        {solutionRows.map((r) => (
          <div key={r.label} className={`h-[19px] flex items-center pb-px ${r.active ? "bg-[#e6e7ed]" : ""}`}>
            <span className="w-[50px] pl-[28px] flex items-center shrink-0">
              {r.arrow && (
                <svg width="6" height="9" viewBox="0 0 6 9" fill="none" stroke="#222">
                  <path d="M.5.5v8l5-4z" />
                </svg>
              )}
            </span>
            {r.icon === "cs" ? (
              <span className="w-[16px] text-[#388a34] text-[10px] font-bold shrink-0 tracking-tight">C#</span>
            ) : (
              <Ic name={r.icon} className="w-[16px]" />
            )}
            <span className="ml-[5px]">{r.label}</span>
          </div>
        ))}
      </div>
    </div>
  );
}

function PropertiesPanel() {
  return (
    <div className="flex-1 min-h-0 flex flex-col">
      <PanelHeader title="Properties" />
      <div className="h-[25px] bg-[#f8f9ff] flex items-center pl-[6px] pr-[3px] pb-[2px] shrink-0">
        <span className="font-bold">button1</span>
        <span className="ml-[7px]">Wisej.Web.Button</span>
        <Caret className="ml-auto" />
      </div>
      <div className="h-[25px] mx-px bg-[#ccd5f0] flex items-center pl-[3px] shrink-0">
        <Ic name="categorize" className="w-[22px]" />
        <span className="ml-[3px] w-[23px] h-[23px] bg-[#fdf1d0] border border-[#8a6d2f] flex items-center justify-center">
          <Ic name="alpha" className="w-[16px]" />
        </span>
        <Sep className="ml-[3px]" />
        <span className="ml-[2px] w-[23px] h-[23px] bg-[#fdf1d0] border border-[#8a6d2f] flex items-center justify-center">
          <Ic name="propPage" className="w-[16px]" />
        </span>
        <Ic name="bolt" className="w-[22px]" />
        <Sep className="ml-[4px]" />
        <Ic name="wrenchDis" className="w-[22px] ml-[3px]" />
      </div>
      <div className="h-[255px] mt-px bg-[#f8f9ff] flex shrink-0">
        <div className="flex-1 min-w-0 overflow-hidden">
          {props.map(([name, value, expand], i) => (
            <div key={name} className="h-[19px] flex">
              <span className="w-[15px] pl-[3px] flex items-center shrink-0">
                {expand && (
                  <svg width="9" height="9" viewBox="0 0 9 9" fill="none" stroke="#222">
                    <path d="M.5.5h8v8h-8zM2 4.500h5M4.500 2v5" />
                  </svg>
                )}
              </span>
              <span className={`w-[178px] pl-[4px] flex items-center shrink-0 border-b border-r border-[#eceef6] ${i === 0 ? "bg-[#f0f0f4]" : ""}`}>
                {name}
              </span>
              <span className={`flex-1 pl-[3px] flex items-center border-b border-[#eceef6] ${name === "(Name)" ? "font-bold" : ""}`}>
                {name === "Anchor" && (
                  <span className="w-[20px] h-[15px] -ml-[2px] mr-[8px] border border-[#222] bg-white flex justify-end items-end p-[2px]">
                    <span className="w-[12px] h-[7px] border border-[#1c62a8] bg-[#dbe6f8]" />
                  </span>
                )}
                {value}
              </span>
            </div>
          ))}
        </div>
        <div className="w-[18px] bg-[#e8e8ec] flex flex-col items-center shrink-0">
          <svg className="mt-[8px]" width="9" height="5" viewBox="0 0 9 5">
            <path d="M0 5h9L4.500 0z" fill="#9ca0ad" />
          </svg>
          <div className="mt-[3px] w-[9px] h-[42px] bg-[#c2c3c9]" />
          <svg className="mt-auto mb-[6px]" width="9" height="5" viewBox="0 0 9 5">
            <path d="M0 0h9L4.500 5z" fill="#9ca0ad" />
          </svg>
        </div>
      </div>
      <div className="flex-1 bg-[#f8f9ff] border-t border-[#d4d8e6] pl-[6px] pt-[5px]">
        <div className="font-bold h-[17px]">(ApplicationSettings)</div>
        <div className="h-[18px]">Maps property settings to an application configuration file.</div>
      </div>
    </div>
  );
}

export default function App() {
  return (
    <div className="w-[1928px] h-[1048px] flex flex-col overflow-hidden font-['Noto_Sans',sans-serif] text-[11.5px] tracking-[-0.25px] text-[#1e1e1e]">
      <div className="flex-1 min-h-0 flex">
        {/* background window scrollbar peeking out on the left */}
        <div className="w-[8px] shrink-0 bg-[#f0f0f0] flex flex-col">
          <div className="h-[33px]" />
          <div className="h-[33px] bg-white" />
          <svg className="mt-[10px]" width="6" height="4" viewBox="0 0 6 4">
            <path d="M0 4h6L3 0z" fill="#444" />
          </svg>
          <div className="mt-[350px] w-[6px] h-[255px] bg-[#c0c0c0]" />
        </div>
        <div className="flex-1 min-w-0 flex flex-col">
          <TitleBar />
          <div className="h-[951px] bg-[#5d6b99] flex gap-[8px] p-[7px] shrink-0">
            <Toolbox />
            <DocumentWell />
            <div className="w-[397px] flex flex-col gap-[8px] shrink-0">
              <SolutionExplorer />
              <PropertiesPanel />
            </div>
          </div>
          <div className="h-[23px] bg-[#40518c] text-white flex items-center pb-px shrink-0">
            <Ic name="ready" className="w-[16px] ml-[3px]" />
            <span className="ml-[9px] w-[1113px] shrink-0">Ready</span>
            <Ic name="pos" className="w-[16px]" />
            <span className="ml-[3px] w-[140px] shrink-0">85 , 90</span>
            <Ic name="size" className="w-[16px]" />
            <span className="ml-[3px]">228 x 104</span>
            <span className="ml-auto mr-[18px] relative">
              <Ic name="bell" className="w-[16px]" />
              <span className="absolute -right-[4px] top-[5px] w-[12px] h-[12px] rounded-full bg-[#e01010] text-white text-[9px] flex items-center justify-center">
                1
              </span>
            </span>
          </div>
        </div>
      </div>
      <div className="h-[8px] bg-[#1b2a4e] flex shrink-0 overflow-hidden">
        <span className="ml-[401px] w-[44px] bg-[#46516e]" />
        <span className="ml-auto mr-[12px] mt-[2px] text-white text-[11px] leading-[14px]">9:33 PM</span>
      </div>
    </div>
  );
}
